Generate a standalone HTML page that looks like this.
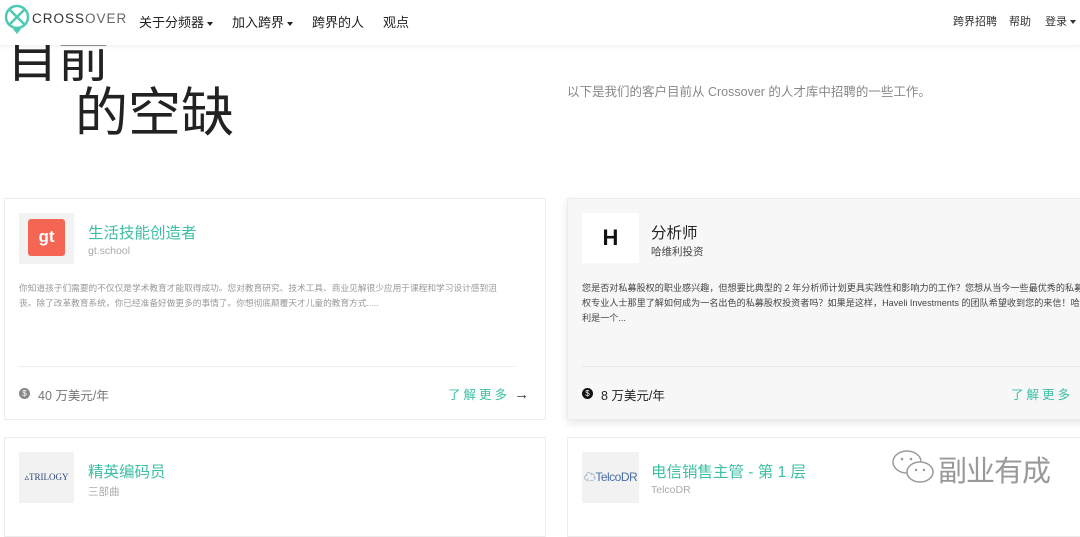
<!DOCTYPE html><html><head><meta charset="utf-8"><style>
*{margin:0;padding:0;box-sizing:border-box}
body{width:1080px;height:516px;overflow:hidden;background:#fff;font-family:"Liberation Sans","Noto Sans CJK SC",sans-serif;position:relative}
.hdr{position:absolute;left:0;top:0;width:1080px;height:45px;background:#fff;box-shadow:0 2px 4px rgba(0,0,0,.06);z-index:5}
.a{position:absolute;white-space:nowrap}
.nav{font-size:13px;color:#222;top:12px}
.tri{display:inline-block;width:0;height:0;border-left:3.5px solid transparent;border-right:3.5px solid transparent;border-top:4px solid #222;vertical-align:middle;margin-left:3px}
.card{position:absolute;border:1px solid #ececec;background:#fff;overflow:hidden}
.logo{position:absolute;background:#f2f2f2}
.t{font-size:15.5px;color:#3cbfa5}
.s{font-size:10.5px;color:#aaa}
.d{font-size:8.7px;letter-spacing:0;color:#999;line-height:15px}
</style></head><body>
<div class="hdr">
<svg class="a" style="left:4px;top:4px" width="28" height="32" viewBox="0 0 28 32"><circle cx="13" cy="13" r="11" fill="none" stroke="#4fc9b3" stroke-width="2.5"/><path d="M6 6L20 20M20 6L6 20" stroke="#4fc9b3" stroke-width="2.5"/><path d="M9 25L13 30L17 25" fill="#4fc9b3"/></svg>
<div class="a" style="left:32px;top:11px;font-size:13.5px;letter-spacing:1px;color:#333">CROSS<span style="color:#666">OVER</span></div>
<div class="a nav" style="left:139px">关于分频器<span class="tri"></span></div>
<div class="a nav" style="left:232px">加入跨界<span class="tri"></span></div>
<div class="a nav" style="left:312px">跨界的人</div>
<div class="a nav" style="left:383px">观点</div>
<div class="a" style="left:953px;top:13px;font-size:11px;color:#333">跨界招聘</div>
<div class="a" style="left:1009px;top:13px;font-size:11px;color:#333">帮助</div>
<div class="a" style="left:1045px;top:13px;font-size:11px;color:#333">登录<span class="tri" style="border-top-color:#333"></span></div>
</div>
<div class="a" style="left:7px;top:30px;font-size:51px;color:#222;line-height:60px">目前</div>
<div class="a" style="left:75px;top:84px;font-size:53px;color:#222;line-height:60px">的空缺</div>
<div class="a" style="left:567px;top:81px;font-size:12.5px;color:#888">以下是我们的客户目前从 Crossover 的人才库中招聘的一些工作。</div>

<div class="card" style="left:4px;top:198px;width:542px;height:222px">
<div class="logo" style="left:14px;top:14px;width:55px;height:51px"><div style="position:absolute;left:9px;top:6px;width:37px;height:37px;background:#f56554;border-radius:3px;color:#fff;font-weight:bold;font-size:17px;text-align:center;line-height:35px">gt</div></div>
<div class="a t" style="left:83px;top:22px">生活技能创造者</div>
<div class="a s" style="left:83px;top:46px">gt.school</div>
<div class="a d" style="left:14px;top:82px">你知道孩子们需要的不仅仅是学术教育才能取得成功。您对教育研究、技术工具、商业见解很少应用于课程和学习设计感到沮<br>丧。除了改革教育系统，你已经准备好做更多的事情了。你想彻底颠覆天才儿童的教育方式.....</div>
<div class="a" style="left:14px;top:167px;width:496px;border-top:1px solid #eee"></div>
<div class="a" style="left:14px;top:189px;width:11px;height:11px;border-radius:50%;background:#888;color:#fff;font-size:8px;text-align:center;line-height:11px">$</div>
<div class="a" style="left:33px;top:186px;font-size:12.5px;color:#777">40 万美元/年</div>
<div class="a" style="left:443px;top:185px;font-size:12.5px;color:#3cbfa5;letter-spacing:3px">了解更多<span style="color:#333;letter-spacing:0;font-size:15px"> →</span></div>
</div>

<div class="card" style="left:567px;top:198px;width:520px;height:222px;background:#f7f7f7;box-shadow:0 3px 8px rgba(0,0,0,.1)">
<div class="logo" style="left:14px;top:14px;width:57px;height:50px;background:#fff;font-weight:bold;font-size:22px;text-align:center;line-height:50px;color:#111">H</div>
<div class="a" style="left:83px;top:22px;font-size:15.5px;color:#222">分析师</div>
<div class="a" style="left:83px;top:45px;font-size:10.5px;color:#444">哈维利投资</div>
<div class="a d" style="left:14px;top:82px;color:#444;font-size:9.1px">您是否对私募股权的职业感兴趣，但想要比典型的 2 年分析师计划更具实践性和影响力的工作？您想从当今一些最优秀的私募股<br>权专业人士那里了解如何成为一名出色的私募股权投资者吗？如果是这样，Haveli Investments 的团队希望收到您的来信！哈维<br>利是一个...</div>
<div class="a" style="left:14px;top:167px;width:510px;border-top:1px solid #e8e8e8"></div>
<div class="a" style="left:14px;top:189px;width:11px;height:11px;border-radius:50%;background:#111;color:#fff;font-size:8px;text-align:center;line-height:11px">$</div>
<div class="a" style="left:33px;top:186px;font-size:12.5px;color:#222">8 万美元/年</div>
<div class="a" style="left:443px;top:185px;font-size:12.5px;color:#3cbfa5;letter-spacing:3px">了解更多</div>
</div>

<div class="card" style="left:4px;top:437px;width:542px;height:100px">
<div class="logo" style="left:14px;top:14px;width:55px;height:51px;font-family:'Liberation Serif',serif;font-size:9px;color:#2d4a7a;line-height:51px;text-align:center">▵TRILOGY</div>
<div class="a t" style="left:83px;top:22px">精英编码员</div>
<div class="a s" style="left:83px;top:46px">三部曲</div>
</div>
<div class="card" style="left:567px;top:437px;width:520px;height:100px">
<div class="logo" style="left:14px;top:14px;width:57px;height:51px;font-size:12px;color:#4a6fa5;line-height:51px;text-align:center;letter-spacing:-.5px">☁TelcoDR</div>
<div class="a t" style="left:83px;top:22px">电信销售主管 - 第 1 层</div>
<div class="a s" style="left:83px;top:46px">TelcoDR</div>
</div>
<svg class="a" style="left:890px;top:448px" width="48" height="38" viewBox="0 0 48 38"><ellipse cx="17" cy="14" rx="14" ry="11" fill="#fff" stroke="#999" stroke-width="1.5"/><ellipse cx="30" cy="24" rx="13" ry="10" fill="#fff" stroke="#999" stroke-width="1.5"/><circle cx="12" cy="11" r="1.3" fill="#999"/><circle cx="21" cy="11" r="1.3" fill="#999"/><circle cx="26" cy="22" r="1.2" fill="#999"/><circle cx="34" cy="22" r="1.2" fill="#999"/></svg>
<div class="a" style="left:938px;top:448px;font-size:29px;color:#999;letter-spacing:-1px">副业有成</div>
</body></html>
